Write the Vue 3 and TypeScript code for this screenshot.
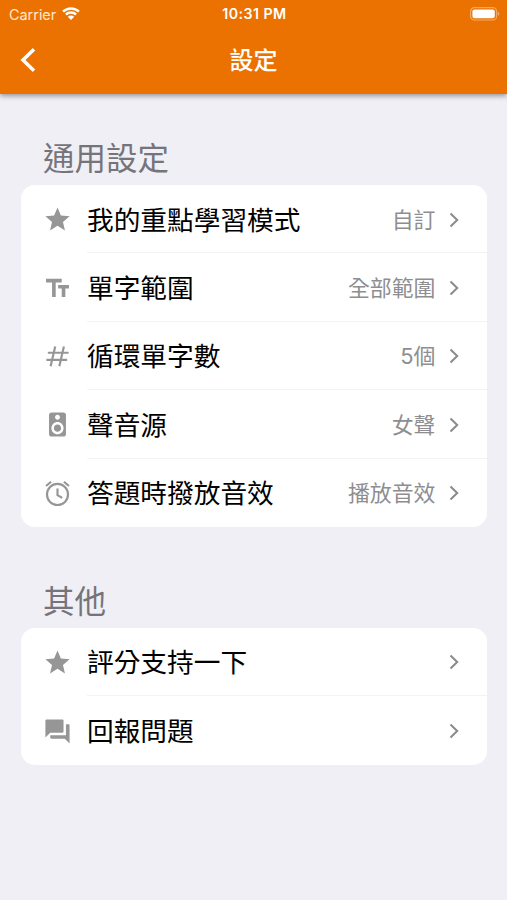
<script setup lang="ts">
type IconName = 'star' | 'text' | 'hash' | 'speaker' | 'alarm' | 'forum'

interface Row {
  icon: IconName
  label: string
  value?: string
}

interface Section {
  title: string
  rows: Row[]
}

const sections: Section[] = [
  {
    title: '通用設定',
    rows: [
      { icon: 'star', label: '我的重點學習模式', value: '自訂' },
      { icon: 'text', label: '單字範圍', value: '全部範圍' },
      { icon: 'hash', label: '循環單字數', value: '5個' },
      { icon: 'speaker', label: '聲音源', value: '女聲' },
      { icon: 'alarm', label: '答題時撥放音效', value: '播放音效' },
    ],
  },
  {
    title: '其他',
    rows: [
      { icon: 'star', label: '評分支持一下' },
      { icon: 'forum', label: '回報問題' },
    ],
  },
]

const filled: Partial<Record<IconName, string>> = {
  star: 'M12 17.27 18.18 21l-1.64-7.03L22 9.24l-7.19-.61L12 2 9.19 8.63 2 9.24l5.46 4.73L5.82 21z',
  text: 'M2.5 4v3h5v12h3V7h5V4h-13zm19 5h-9v3h3v7h3v-7h3V9z',
  speaker:
    'M17 2H7c-1.1 0-2 .9-2 2v16c0 1.1.9 2 2 2h10c1.1 0 2-.9 2-2V4c0-1.1-.9-2-2-2zm-5 2c1.1 0 2 .9 2 2s-.9 2-2 2-2-.9-2-2 .9-2 2-2zm0 16c-2.76 0-5-2.24-5-5s2.24-5 5-5 5 2.24 5 5-2.24 5-5 5zm0-8c-1.66 0-3 1.34-3 3s1.34 3 3 3 3-1.34 3-3-1.34-3-3-3z',
  forum:
    'M21 6h-2v9H6v2c0 .55.45 1 1 1h11l4 4V7c0-.55-.45-1-1-1zm-4 6V3c0-.55-.45-1-1-1H3c-.55 0-1 .45-1 1v14l4-4h10c.55 0 1-.45 1-1z',
}

const stroked: Partial<Record<IconName, string>> = {
  hash: 'M10.1 3.7 6.3 20M17.3 3.7 13.5 20M4 8.9h17.2M2.8 14.8H20',
  alarm:
    'M20.7 12.8a8.7 8.7 0 1 1-17.4 0 8.7 8.7 0 0 1 17.4 0zM12 7.8v5.5l3.9 2.3M2.5 5.8 6.7 2.3M21.5 5.8l-4.2-3.5',
}
</script>

<template>
  <div class="screen">
    <header class="header">
      <div class="status">
        <div class="carrier">
          <span>Carrier</span>
          <svg class="wifi" viewBox="0 0 18 13">
            <path d="M1.1 4.6a11.4 11.4 0 0 1 15.8 0M3.9 7.5a7.4 7.4 0 0 1 10.2 0" />
            <path class="dot" d="M9 13 5.8 9.7a4.6 4.6 0 0 1 6.4 0z" />
          </svg>
        </div>
        <span class="time">10:31 PM</span>
        <svg class="battery" viewBox="0 0 30 14">
          <rect class="shell" x=".6" y=".6" width="26" height="12.4" rx="3.8" />
          <rect x="2.4" y="2.4" width="22.4" height="8.8" rx="2.2" />
          <path class="tip" d="M28 4.8c1.7.6 1.7 3.4 0 4z" />
        </svg>
      </div>
      <nav class="nav">
        <svg class="back" viewBox="0 0 16 26"><path d="M14 2.2 3 13l11 10.8" /></svg>
        <h1>設定</h1>
      </nav>
    </header>

    <main>
      <section v-for="section in sections" :key="section.title">
        <h2>{{ section.title }}</h2>
        <ul class="card">
          <li v-for="row in section.rows" :key="row.label">
            <svg class="icon" viewBox="0 0 24 24">
              <path v-if="filled[row.icon]" :d="filled[row.icon]" />
              <path v-else class="line" :d="stroked[row.icon]" />
            </svg>
            <div class="content">
              <span class="label">{{ row.label }}</span>
              <span class="value">{{ row.value }}</span>
              <svg class="chevron" viewBox="0 0 10 16"><path d="m1.5 1.5 6.7 6.5-6.7 6.5" /></svg>
            </div>
          </li>
        </ul>
      </section>
    </main>
  </div>
</template>

<style>
body {
  background: #f0eff5;
}
</style>

<style scoped>
.screen {
  min-height: 900px;
  background: #f0eff5;
  font-family: Inter, 'Noto Sans CJK TC', sans-serif;
}
.header {
  position: relative;
  height: 94px;
  background: #eb7200;
  color: #fff;
  box-shadow: 0 2px 5px rgba(0, 0, 0, 0.38);
}
.status {
  display: grid;
  grid-template-columns: 1fr auto 1fr;
  align-items: center;
  height: 27px;
  padding: 0 7px 0 9px;
  line-height: 27px;
}
.carrier {
  display: flex;
  align-items: center;
  gap: 6px;
  font-size: 14.4px;
  color: #ffe8d0;
}
.wifi {
  width: 18px;
  height: 13px;
  margin-top: -2px;
  fill: none;
  stroke: #fff;
  stroke-width: 2.5;
}
.wifi .dot {
  fill: #fff;
  stroke: none;
}
.time {
  padding-bottom: 1px;
  font-weight: 600;
  font-size: 14.2px;
  letter-spacing: 0.45px;
}
.battery {
  justify-self: end;
  width: 30px;
  height: 14px;
  margin-top: -1px;
  fill: #fff;
}
.battery .shell {
  fill: none;
  stroke: rgba(255, 255, 255, 0.4);
  stroke-width: 1.2;
}
.battery .tip {
  fill: rgba(255, 255, 255, 0.45);
}
.nav {
  display: grid;
  grid-template-columns: 1fr auto 1fr;
  align-items: center;
  height: 66px;
  padding: 0 20px;
}
.back {
  width: 16px;
  height: 26px;
  fill: none;
  stroke: #fff;
  stroke-width: 3.5;
}
h1 {
  margin: 0;
  padding-top: 2px;
  font-size: 24px;
  font-weight: 500;
  line-height: 32px;
}
main {
  padding: 40px 20px 0 21px;
}
section + section {
  margin-top: 50px;
}
h2 {
  margin: 0;
  padding-left: 22px;
  height: 51px;
  font-size: 31.5px;
  font-weight: 400;
  line-height: 50px;
  color: #74747a;
}
.card {
  margin: 0;
  padding: 0;
  list-style: none;
  overflow: hidden;
  border-radius: 14px;
  background: #fff;
}
li {
  display: flex;
  align-items: center;
  height: 68.4px;
  padding-left: 22px;
}
.icon {
  flex: none;
  width: 29px;
  height: 29px;
  margin-top: 1px;
  margin-right: 15px;
  fill: #969696;
}
.icon .line {
  fill: none;
  stroke: #969696;
  stroke-width: 1.8;
}
.content {
  display: flex;
  flex: 1;
  align-items: center;
  height: 100%;
  box-sizing: border-box;
  padding-top: 2px;
  padding-right: 28px;
  border-bottom: 1.5px solid #f3f3f4;
}
section + section .content {
  padding-top: 1px;
}
li:last-child .content {
  border-bottom-color: transparent;
}
.label {
  flex: 1;
  font-size: 26.7px;
  line-height: 40px;
  color: #000;
}
.value {
  font-size: 21.9px;
  line-height: 34px;
  color: #8e8e90;
}
.chevron {
  width: 10px;
  height: 16px;
  margin-left: 13.5px;
  fill: none;
  stroke: #8a8a8d;
  stroke-width: 2;
}
</style>
